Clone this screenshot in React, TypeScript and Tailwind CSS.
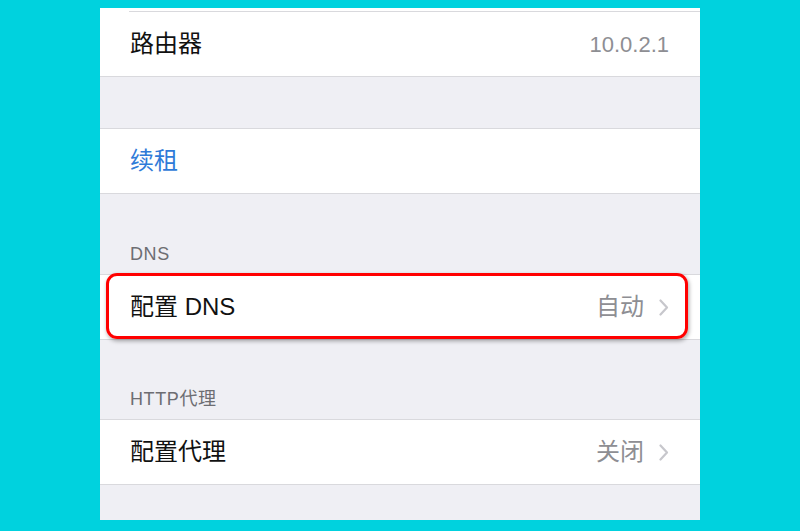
import { ReactNode } from 'react';

const font = { fontFamily: '"Liberation Sans", "Noto Sans CJK SC", sans-serif' };

const Chevron = () => (
  <svg width="10" height="17" viewBox="0 0 10 17" className="ml-[15px]">
    <path d="M1.5 1.5 L8 8.5 L1.5 15.5" fill="none" stroke="#c7c7cc" strokeWidth="2.2" strokeLinecap="round" strokeLinejoin="round" />
  </svg>
);

function Row({ label, value, chevron, blue, highlight }: { label: string; value?: string; chevron?: boolean; blue?: boolean; highlight?: boolean }) {
  return (
    <div className="relative bg-white h-[65px] border-b border-[#d9d9dd] flex items-center pl-[30px] pr-[31px]">
      <span className={`text-[24px] ${blue ? 'text-[#2f7bd8]' : 'text-[#111]'}`}>{label}</span>
      <div className="ml-auto flex items-center">
        {value && <span className="text-[24px] text-[#8e8e93]">{value}</span>}
        {chevron && <Chevron />}
      </div>
      {highlight && (
        <div className="absolute left-[6px] right-[12px] top-[-2px] bottom-[0px] border-[3px] border-[#f00] rounded-[11px] shadow-[1px_2px_4px_rgba(0,0,0,0.35)]" />
      )}
    </div>
  );
}

const Header = ({ h, children }: { h: string; children?: ReactNode }) => (
  <div className={`${h} border-b border-[#d9d9dd] flex items-end pl-[30px] pb-[6px] text-[18px] tracking-[0.6px] text-[#6d6d72]`}>{children}</div>
);

export default function App() {
  return (
    <div className="w-[800px] h-[531px] bg-[#00d2de] pt-2 px-[100px] overflow-hidden" style={font}>
      <div className="bg-[#efeff4] h-[512px] overflow-hidden">
        <div className="bg-white pt-[3px]">
          <div className="ml-[29px] border-t border-[#d9d9dd]" />
          <div className="h-[65px] border-b border-[#d9d9dd] flex items-center pl-[30px] pr-[31px]">
            <span className="text-[24px] text-[#111]">路由器</span>
            <span className="ml-auto text-[22px] text-[#8e8e93]">10.0.2.1</span>
          </div>
        </div>
        <Header h="h-[52px]" />
        <Row label="续租" blue />
        <Header h="h-[81px]">DNS</Header>
        <Row label="配置 DNS" value="自动" chevron highlight />
        <Header h="h-[80px]">HTTP代理</Header>
        <Row label="配置代理" value="关闭" chevron />
      </div>
    </div>
  );
}
